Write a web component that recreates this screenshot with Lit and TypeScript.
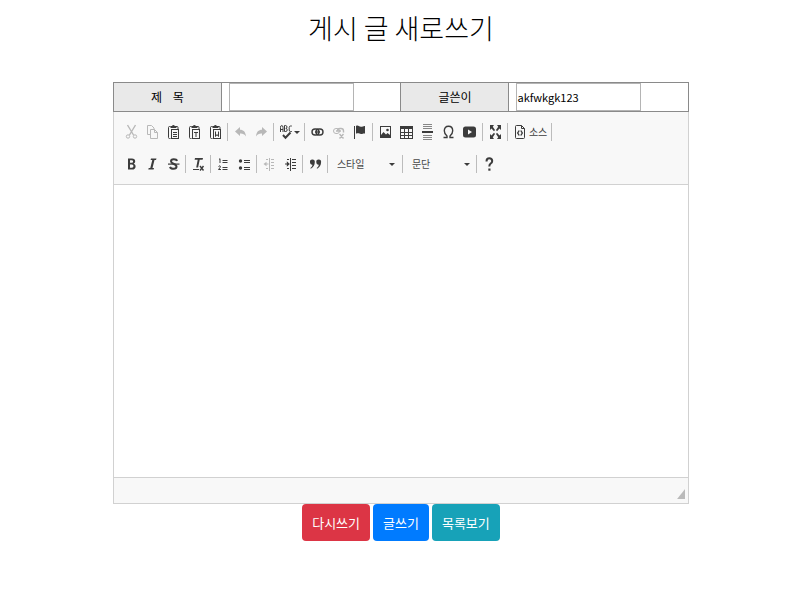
import { LitElement, html, css, svg, nothing, TemplateResult } from "lit";
import { customElement } from "lit/decorators.js";
import { classMap } from "lit/directives/class-map.js";

const clipboard = svg`
  <path d="M4.5 2.5H3.5a1 1 0 0 0-1 1v10a1 1 0 0 0 1 1h1M10 2.5h1a1 1 0 0 1 1 1V5" class="line"/>
  <path d="M4.500 4V2H6a1.500 1.500 0 0 1 2.800 0h1.600V4z"/>
  <rect x="5.5" y="5.5" width="7" height="9" class="line"/>`;

const icons: Record<string, TemplateResult> = {
  cut: svg`<path d="M3.5 1 9.5 11M11.500 1 5.500 11" class="line thick"/>
    <circle cx="4" cy="12.500" r="1.700" class="line"/><circle cx="11" cy="12.500" r="1.700" class="line"/>`,
  copy: svg`<path d="M5.500 10.500h-3v-9h4l2.500 2.500v1.500" class="line"/>
    <path d="M5.500 5.500h4l3 3v6h-7z M9.500 5.500v3h3" class="line"/>`,
  paste: svg`${clipboard}<path d="M7 8.500h4M7 10.500h4M7 12.500h4" class="line"/>`,
  pasteText: svg`${clipboard}<path d="M7 8.500h4M9 8.500V13" class="line"/>`,
  pasteWord: svg`${clipboard}<path d="M7.500 7.500V12.500L9 10.500l1.500 2V7.500" class="line"/>`,
  undo: svg`<path d="M2 7.500 7 3v2.800c3.500 0 5.500 2 6 6.700C11.500 10 9.500 9.300 7 9.500V12z"/>`,
  redo: svg`<path d="M13 7.500 8 3v2.800c-3.500 0-5.500 2-6 6.700C3.500 10 5.500 9.300 8 9.500V12z"/>`,
  spell: svg`<path d="M1.500 8V3.500q0-2 1.250-2t1.250 2V8M1.500 5.500H4M5.500 1.500v6h1.300q1.400 0 1.400-1.600T6.800 4.400Q8 4.200 8 3T6.700 1.500zM12.800 2h-1.200q-1.400 0-1.400 1.500v2.500q0 1.500 1.400 1.500h1.200" class="line"/>
    <path d="m4 11 2.500 2.800L11.500 8.500" class="line heavy"/>`,
  link: svg`<rect x="2" y="5" width="7" height="6" rx="3" class="line thick"/><rect x="6" y="5" width="7" height="6" rx="3" class="line thick"/><path d="M5 8h5" class="line thick"/>`,
  unlink: svg`<rect x="2.500" y="4.500" width="6" height="5" rx="2.500" class="line"/><path d="M6.500 7q0-2.500 2.500-2.500h1q2.500 0 2.500 2.500v1.500M5 7h5M8.500 10l4 4.500m0-4.500-4 4.500" class="line thick"/>`,
  flag: svg`<path d="M2 2h1v13H2zM4 2c2-1.500 3.500 1 5 .8 1.500 0 2.500-1 4-.8V9.500c-2-.5-2.500.8-4 .5C7.500 9.700 6 8.500 4 9.700z"/>`,
  image: svg`<path fill-rule="evenodd" d="M2 2h11v12H2zM3 3v8l2.500-3L8 10.500 9.500 9l2.500 2V3z"/><circle cx="9.500" cy="6" r="1.300"/>`,
  table: svg`<rect x="1.500" y="2.500" width="12" height="12" class="line"/><path d="M1 2h13v3H1z"/><path d="M1.500 8.500h12M1.500 11.500h12M5.500 5v9M9.500 5v9" class="line"/>`,
  rule: svg`<path d="M3 .5h9M3 2.500h9M3 4.500h9M3 11.500h9M3 13.500h9M3 15.500h9" class="line faint"/><path d="M2 7h11v2H2z"/>`,
  omega: svg`<path d="M2.500 13.500H6v-1.500Q3.300 10 3.300 6.800q0-4.600 4.200-4.600T11.700 6.800q0 3.200-2.700 5.200v1.500h3.500" class="line thick"/>`,
  video: svg`<path fill-rule="evenodd" d="M3.500 2.500h8Q14 2.500 14 5v6q0 2.500-2.500 2.500h-8Q1 13.500 1 11V5Q1 2.500 3.500 2.500M6 5.500v5L10 8z"/>`,
  maximize: svg`<path d="M2 1h4L4.800 2.700 7 6 6 7.200 3.500 4.400 2 6zM13 1H9l1.200 1.700L8 6l1 1.200 2.500-2.800L13 6zM2 15h4l-1.200-1.700L7 10 6 8.800l-2.500 2.800L2 10zM13 15H9l1.200-1.700L8 10l1-1.200 2.500 2.800L13 10z"/>`,
  source: svg`<path d="M8.500 1.500h-5a1 1 0 0 0-1 1v11a1 1 0 0 0 1 1h7a1 1 0 0 0 1-1v-9l-3-3v3h3" class="line"/><path d="M6.200 6.500 4.700 9l1.500 2.500M7.800 6.500 9.300 9l-1.500 2.500" class="line thick"/>`,
  bold: svg`<path fill-rule="evenodd" d="M4 2.500h4c2 0 3.200 1 3.200 2.800 0 1.200-.6 2-1.500 2.400 1.200.4 1.900 1.300 1.900 2.700 0 2-1.400 3.100-3.400 3.100H4zM6 4.200v2.600h1.700c1.800 0 1.800-2.600 0-2.600zM6 8.500v3.200h1.900c2 0 2-3.200 0-3.200z"/>`,
  italic: svg`<path d="M6 2.500h5.500L11 4H9.500l-2 8H9l-.4 1.500H3.300L3.700 12h1.600l2-8H5.600z"/>`,
  strike: svg`<path d="M11 5Q10.500 3.300 7.800 3.300 5 3.300 5 5.300q0 1.500 2.500 2.500Q10.500 9 10.500 10.800q0 2-3 2-2.800 0-3.500-2" class="line heavy"/><path d="M2 7.500h11.500v1.200H2z"/>`,
  clear: svg`<path d="M4 2h8l-.4 1.800H8.700L7.100 11.500H5.200L6.700 3.800H3.600zM2 13h6v1H2z"/><path d="m9 10 3.500 4.500M12.500 10 9 14.500" class="line thick"/>`,
  numbered: svg`<path d="M3 3.500l1-.8V7M2.500 10.500q2-1.500 2 0 0 .8-2 3h2.500" class="line"/><path d="M6.500 4.500h5M6.500 6.500h5M6.500 11.500h5M6.500 13.500h5" class="line"/>`,
  bullets: svg`<circle cx="3.500" cy="5" r="1.700"/><circle cx="3.500" cy="12" r="1.700"/><path d="M7 4.500h6M7 6.500h6M7 11.500h6M7 13.500h6" class="line"/>`,
  outdent: svg`<path d="M7.500 2v13M9 3.500h3M9 6.500h3M9 9.500h3M9 12.500h3M4 3.500h2M4 12.500h2M3 8h3.500" class="line"/><path d="M1.500 8 4.500 5.700v4.600z"/>`,
  indent: svg`<path d="M7.500 2v13M9 3.500h4M9 6.500h4M9 9.500h4M9 12.500h4M4 3.500h2M4 12.500h2M2 8h3" class="line"/><path d="M6.800 8 3.800 5.300v5.400z"/>`,
  quote: svg`<path d="M4.300 3.500a2.400 2.400 0 0 1 2.500 2.600c0 3-1.500 5.500-4 6.600l-.4-.8c1.300-.8 2-1.900 2-3.200A2.500 2.500 0 0 1 2 6.100a2.300 2.300 0 0 1 2.300-2.600M10.600 3.500a2.400 2.400 0 0 1 2.500 2.600c0 3-1.500 5.500-4 6.600l-.4-.8c1.300-.8 2-1.900 2-3.200a2.500 2.500 0 0 1-2.400-2.600 2.300 2.300 0 0 1 2.300-2.600"/>`,
  help: svg`<path d="M4.500 5.500Q4.500 2.300 7.300 2.300t2.900 2.600Q10.200 6.500 8.700 7.500 7.300 8.500 7.300 10.500" class="line heavy"/><path d="M6.300 12.500h2.200v2.200H6.300z"/>`,
};

interface Tool {
  icon: string;
  name: string;
  off?: boolean;
  text?: string;
  menu?: boolean;
}
const t = (icon: string, name: string, extra: Partial<Tool> = {}): Tool => ({ icon, name, ...extra });

type Group = Tool[] | string;

const rows: Group[][] = [
  [
    [t("cut", "잘라내기", { off: true }), t("copy", "복사", { off: true }), t("paste", "붙여넣기"), t("pasteText", "텍스트로 붙여넣기"), t("pasteWord", "Word에서 붙여넣기")],
    [t("undo", "실행 취소", { off: true }), t("redo", "다시 실행", { off: true })],
    [t("spell", "맞춤법 검사", { menu: true })],
    [t("link", "링크"), t("unlink", "링크 지우기", { off: true }), t("flag", "책갈피")],
    [t("image", "이미지"), t("table", "표"), t("rule", "가로 줄"), t("omega", "특수문자"), t("video", "동영상")],
    [t("maximize", "최대화")],
    [t("source", "소스", { text: "소스" })],
  ],
  [
    [t("bold", "굵게"), t("italic", "기울임꼴"), t("strike", "취소선")],
    [t("clear", "형식 지우기")],
    [t("numbered", "번호 목록"), t("bullets", "글머리 목록")],
    [t("outdent", "내어쓰기", { off: true }), t("indent", "들여쓰기")],
    [t("quote", "인용 단락")],
    "스타일",
    "문단",
    [t("help", "도움말")],
  ],
];

@customElement("editor-toolbar")
export class EditorToolbar extends LitElement {
  static styles = css`
    :host {
      display: block;
      padding: 4px 7px;
      background: #f8f8f8;
      border-bottom: 1px solid #d1d1d1;
      font-family: "Noto Sans CJK KR", sans-serif;
    }
    .row {
      display: flex;
      flex-wrap: wrap;
      align-items: center;
      min-height: 32px;
    }
    .group {
      display: flex;
      align-items: center;
      height: 18px;
      padding: 0 2px;
      border-right: 1px solid #bcbcbc;
    }
    .group:first-child {
      padding: 0 1px 0 0;
    }
    .group.single {
      padding-right: 1px;
    }
    .group.end {
      border-right: 0;
    }
    button {
      display: flex;
      align-items: center;
      justify-content: center;
      min-width: 21px;
      height: 22px;
      padding: 0 3px;
      border: 0;
      background: none;
      color: #3c3c3c;
      font: 10px/16px "Noto Sans CJK KR", sans-serif;
    }
    button:disabled {
      color: #b8b8b8;
    }
    button.labelled {
      gap: 1px;
    }
    svg {
      display: block;
      width: 15px;
      height: 16px;
      fill: currentColor;
    }
    .line {
      fill: none;
      stroke: currentColor;
      stroke-width: 1;
    }
    .thick {
      stroke-width: 1.4;
    }
    .heavy {
      stroke-width: 2;
    }
    .faint {
      opacity: 0.6;
    }
    .arrow {
      border: 3px solid transparent;
      border-top-color: #3c3c3c;
      border-bottom: 0;
    }
    .combo {
      position: relative;
      display: flex;
      align-items: center;
      width: 70px;
    }
    .combo .arrow {
      position: absolute;
      right: 5px;
      pointer-events: none;
    }
    select {
      appearance: none;
      width: 100%;
      height: 22px;
      padding: 0 14px 0 7px;
      border: 0;
      background: none;
      color: #484848;
      font: 10px/16px "Noto Sans CJK KR", sans-serif;
    }
  `;

  private renderTool(tool: Tool) {
    return html`<button
      type="button"
      class=${classMap({ menu: !!tool.menu, labelled: !!tool.text })}
      aria-label=${tool.name}
      ?disabled=${!!tool.off}
    >
      <svg viewBox="0 0 15 16" aria-hidden="true">${icons[tool.icon]}</svg>
      ${tool.text ?? nothing}${tool.menu ? html`<span class="arrow"></span>` : nothing}
    </button>`;
  }

  render() {
    return rows.map(
      (row, r) => html`<div class="row">
        ${row.map(
          (group, i) => html`<div
            class=${classMap({ group: true, single: group.length <= 2, end: r === 1 && i === row.length - 1 })}
          >
            ${typeof group === "string"
              ? html`<span class="combo">
                  <select aria-label=${group}><option>${group}</option></select>
                  <span class="arrow"></span>
                </span>`
              : group.map((tool) => this.renderTool(tool))}
          </div>`
        )}
      </div>`
    );
  }
}

@customElement("app-root")
export class AppRoot extends LitElement {
  static styles = css`
    :host {
      display: block;
      padding-left: 2px;
      color: #000;
      font-family: "Noto Sans CJK KR", sans-serif;
    }
    h1 {
      margin: 8px 0 34px;
      font-size: 27px;
      font-weight: 300;
      line-height: 40px;
      text-align: center;
    }
    form {
      width: 72.2%;
      margin: 0 auto;
    }
    table {
      width: 100%;
      border-collapse: collapse;
      table-layout: fixed;
    }
    th,
    td {
      height: 28px;
      padding: 0;
      border: 1px solid #8a8a8a;
      font-size: 12px;
      line-height: 16px;
    }
    th {
      width: 18.6%;
      background: #e9e9e9;
      font-weight: 400;
    }
    label {
      white-space: pre;
    }
    td input {
      display: block;
      box-sizing: border-box;
      width: 70%;
      height: 28px;
      margin-left: 7px;
      padding: 0;
      border: 1px solid #b4b4b4;
      border-radius: 0;
      font: 11px/16px "Noto Sans CJK KR", sans-serif;
    }
    .editor {
      border: 1px solid #d1d1d1;
      border-top: 0;
    }
    textarea {
      display: block;
      box-sizing: border-box;
      width: 100%;
      height: 292px;
      padding: 16px;
      border: 0;
      outline: 0;
      resize: none;
      font: 13px/20px "Noto Sans CJK KR", sans-serif;
    }
    .status {
      display: flex;
      align-items: flex-end;
      justify-content: flex-end;
      height: 25px;
      padding: 0 3px 0 0;
      border-top: 1px solid #d1d1d1;
      background: #f8f8f8;
    }
    .grip {
      width: 8px;
      height: 10px;
      margin-bottom: 4px;
      background: #bababa;
      clip-path: polygon(100% 0, 100% 100%, 0 100%);
    }
    .actions {
      display: flex;
      justify-content: center;
      gap: 3px;
    }
    .actions button {
      height: 37px;
      padding: 0 10px;
      border: 0;
      border-radius: 4px;
      color: #fff;
      font: 13px/20px "Noto Sans CJK KR", sans-serif;
    }
    .reset {
      background: #dc3545;
    }
    .write {
      background: #007bff;
    }
    .list {
      background: #17a2b8;
    }
  `;

  render() {
    return html`
      <h1>게시 글 새로쓰기</h1>
      <form @submit=${(e: Event) => e.preventDefault()}>
        <table>
          <tr>
            <th scope="row"><label for="title">제    목</label></th>
            <td><input id="title" type="text" /></td>
            <th scope="row"><label for="writer">글쓴이</label></th>
            <td><input id="writer" type="text" value="akfwkgk123" /></td>
          </tr>
        </table>
        <div class="editor">
          <editor-toolbar></editor-toolbar>
          <textarea aria-label="내용"></textarea>
          <div class="status"><span class="grip"></span></div>
        </div>
        <div class="actions">
          <button class="reset" type="reset">다시쓰기</button>
          <button class="write" type="submit">글쓰기</button>
          <button class="list" type="button">목록보기</button>
        </div>
      </form>
    `;
  }
}
